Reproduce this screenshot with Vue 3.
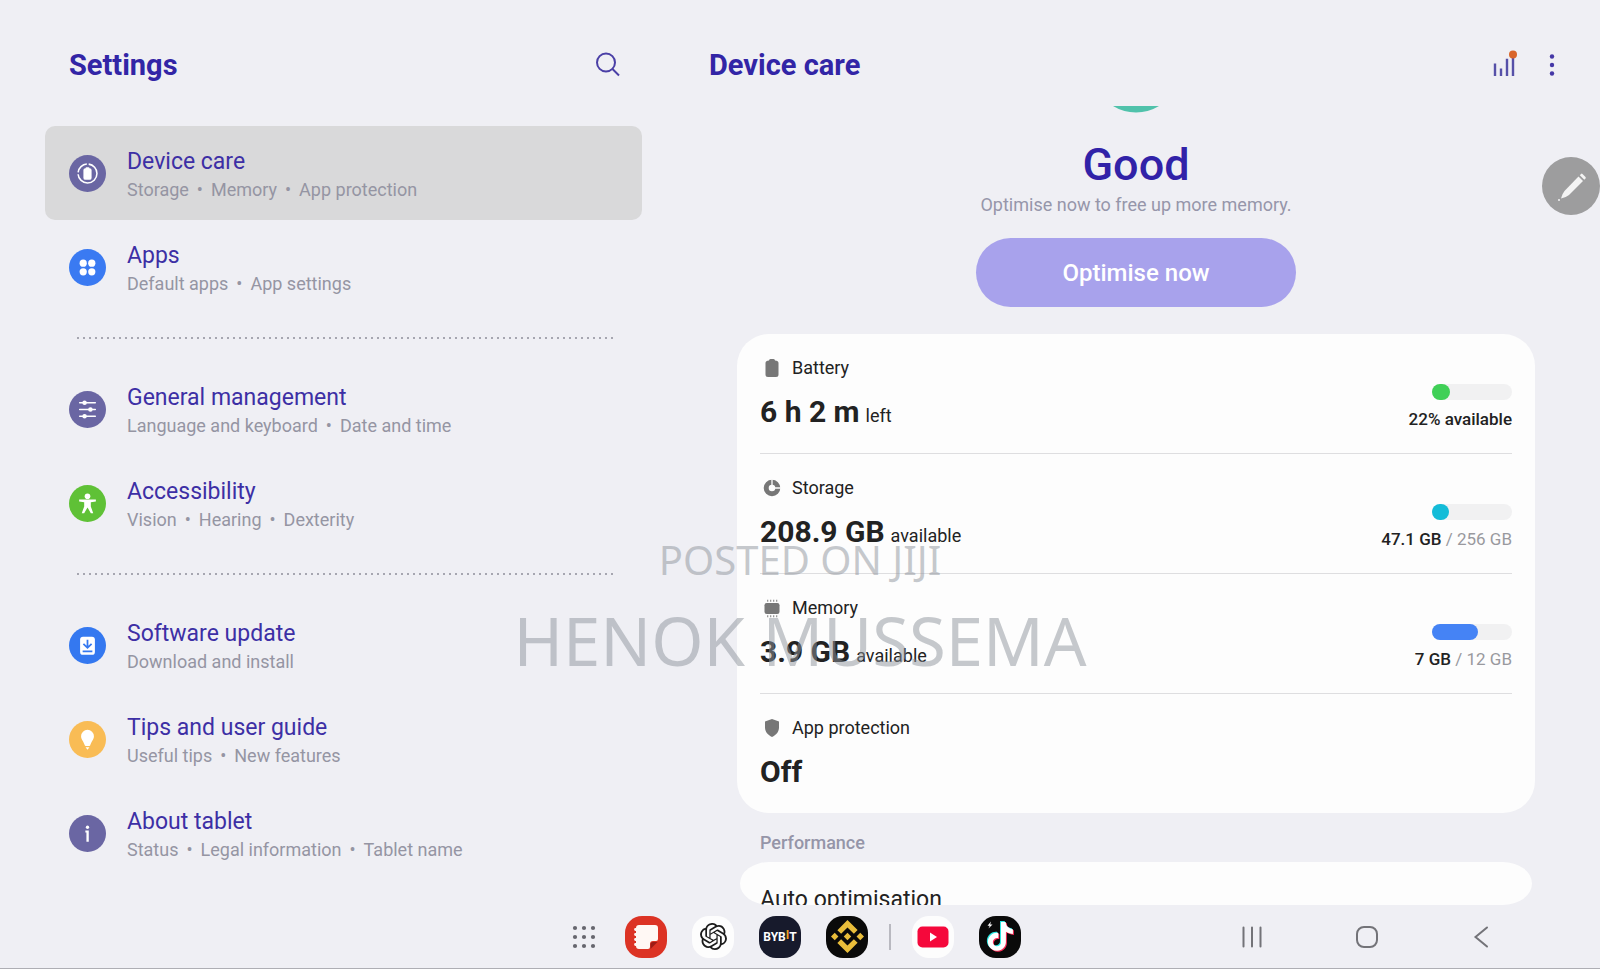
<script setup>
import { ref } from 'vue'

const active = ref('care')

const groups = [
  [
    { id: 'care', title: 'Device care', sub: ['Storage', 'Memory', 'App protection'], color: '#6a66a3' },
    { id: 'apps', title: 'Apps', sub: ['Default apps', 'App settings'], color: '#3a7af2' }
  ],
  [
    { id: 'general', title: 'General management', sub: ['Language and keyboard', 'Date and time'], color: '#6a66a3' },
    { id: 'access', title: 'Accessibility', sub: ['Vision', 'Hearing', 'Dexterity'], color: '#5fc136' }
  ],
  [
    { id: 'update', title: 'Software update', sub: ['Download and install'], color: '#3478f0' },
    { id: 'tips', title: 'Tips and user guide', sub: ['Useful tips', 'New features'], color: '#f9bc55' },
    { id: 'about', title: 'About tablet', sub: ['Status', 'Legal information', 'Tablet name'], color: '#6a66a3' }
  ]
]

const stats = [
  { id: 'battery', label: 'Battery', value: '6 h 2 m', unit: 'left', percent: 22, color: '#40d057', used: '22% available' },
  { id: 'storage', label: 'Storage', value: '208.9 GB', unit: 'available', percent: 21, color: '#14bcd8', used: '47.1 GB', total: ' / 256 GB' },
  { id: 'memory', label: 'Memory', value: '3.9 GB', unit: 'available', percent: 58, color: '#4583f5', used: '7 GB', total: ' / 12 GB' },
  { id: 'protection', label: 'App protection', value: 'Off' }
]
</script>

<template>
  <div class="screen">
    <div class="panes">
      <nav class="sidebar">
        <header class="bar">
          <h1>Settings</h1>
          <button class="icon-btn" aria-label="Search">
            <svg width="26" height="26" viewBox="0 0 26 26" fill="none" stroke="#4a3fa6" stroke-width="2">
              <circle cx="11" cy="10.5" r="9" />
              <path d="M17.5 17L24 23.5" />
            </svg>
          </button>
        </header>

        <div class="menu">
          <ul v-for="(group, i) in groups" :key="i" class="group">
            <li v-for="item in group" :key="item.id">
              <a href="#" class="item" :class="{ active: active === item.id }" @click.prevent="active = item.id">
                <svg width="37" height="37" viewBox="0 0 38 38">
                  <circle cx="19" cy="19" r="19" :fill="item.color" />
                  <g v-if="item.id === 'care'">
                    <circle cx="19" cy="19" r="9.7" fill="none" stroke="#fff" stroke-width="1.6" stroke-dasharray="29.5 2 13.2 2 14.2 0" />
                    <rect x="14.8" y="13.5" width="8.4" height="12" rx="2" fill="#fff" />
                    <rect x="17" y="12.6" width="4" height="2" rx="1" fill="#fff" />
                  </g>
                  <g v-else-if="item.id === 'apps'" fill="#fff">
                    <circle cx="14.6" cy="14.6" r="3.7" />
                    <circle cx="23.4" cy="14.6" r="3.7" />
                    <circle cx="14.6" cy="23.4" r="3.7" />
                    <circle cx="23.4" cy="23.4" r="3.7" />
                  </g>
                  <g v-else-if="item.id === 'general'" stroke="#fff" stroke-width="1.6" stroke-linecap="round">
                    <path d="M11 12h16M11 19h16M11 26h16" />
                    <g fill="#fff" stroke="none">
                      <circle cx="16" cy="12" r="2.3" />
                      <circle cx="22" cy="19" r="2.3" />
                      <circle cx="16" cy="26" r="2.3" />
                    </g>
                  </g>
                  <g v-else-if="item.id === 'access'" fill="#fff">
                    <circle cx="19" cy="11.6" r="2.9" />
                    <path d="M10.4 14.8h17.2v2.1l-5.2.7V22l2.5 7H22.400L19 23l-3.400 6h-2.500l2.500-7v-4.400l-5.200-.7z" />
                  </g>
                  <g v-else-if="item.id === 'update'">
                    <rect x="11.4" y="10" width="15.2" height="18.6" rx="3" fill="#fff" />
                    <path d="M19 13v8M14.8 17.4L19 21.4l4.2-4M14 25h10" fill="none" stroke="#3478f0" stroke-width="1.8" />
                  </g>
                  <g v-else-if="item.id === 'tips'" fill="#fff">
                    <path d="M19 9a6.6 6.6 0 0 1 6.6 6.6c0 3.6-2.6 5-3.8 9.4a1 1 0 0 1-1 .8h-3.6a1 1 0 0 1-1-.8c-1.2-4.4-3.8-5.8-3.8-9.4A6.6 6.6 0 0 1 19 9z" />
                    <path d="M17 27h4l-2 2.6z" />
                  </g>
                  <g v-else fill="#fff">
                    <circle cx="19" cy="12.6" r="1.7" />
                    <path d="M16.8 16h3.5v11.5h-2.4v-9.6h-1.1z" />
                  </g>
                </svg>
                <span class="item-text">
                  <span class="item-title">{{ item.title }}</span>
                  <span class="item-sub">
                    <template v-for="(s, n) in item.sub" :key="s">
                      <i v-if="n" class="dot">•</i>
                      <span>{{ s }}</span>
                    </template>
                  </span>
                </span>
              </a>
            </li>
          </ul>
        </div>
      </nav>

      <main class="detail">
        <header class="bar">
          <h1>Device care</h1>
          <div class="actions">
            <button class="icon-btn" aria-label="Usage">
              <svg width="28" height="30" viewBox="0 -2 28 30">
                <path d="M6 11.5v12.5M12 16.5v7.5M18 6.7v17.3M24 5v19" stroke="#5650a8" stroke-width="2.4" />
                <circle cx="24" cy="2.6" r="4" fill="#d9652b" />
              </svg>
            </button>
            <button class="icon-btn" aria-label="More options">
              <svg width="6" height="26" viewBox="0 0 6 26" fill="#4437a6">
                <circle cx="3" cy="4.5" r="2.2" />
                <circle cx="3" cy="13" r="2.2" />
                <circle cx="3" cy="21.5" r="2.2" />
              </svg>
            </button>
          </div>
        </header>

        <div class="content">
          <section class="status">
            <svg class="arc" width="46" height="7" viewBox="0 0 46 7">
              <path d="M0 0A44 44 0 0 0 46 0z" fill="#50c2ab" />
            </svg>
            <h2>Good</h2>
            <p>Optimise now to free up more memory.</p>
            <button class="optimise">Optimise now</button>
          </section>

          <section class="card">
            <div v-for="s in stats" :key="s.id" class="row">
              <div>
                <div class="label">
                  <svg width="24" height="24" viewBox="0 0 24 24" fill="#777">
                    <path v-if="s.id === 'battery'" d="M9 4.5Q9 3 10.5 3h3Q15 3 15 4.5q3.5 0 3.5 2.5v11.5q0 2.5-2.5 2.5h-8q-2.5 0-2.5-2.5V7q0-2.500 3.500-2.500z" />
                    <g v-else-if="s.id === 'storage'">
                      <circle cx="12" cy="12" r="5.8" fill="none" stroke="#777" stroke-width="5" />
                      <path d="M12 12V3M12 12h9" stroke="#fdfdfd" stroke-width="1.3" />
                    </g>
                    <g v-else-if="s.id === 'memory'">
                      <rect x="4.5" y="7" width="15" height="11" rx="2.2" />
                      <path d="M7 4.700h11M7 20.300h11" stroke="#999" stroke-width="2" stroke-dasharray="1.300 1.700" />
                    </g>
                    <path v-else d="M12 3l7 2.5v6c0 4.5-3 7.5-7 9.5-4-2-7-5-7-9.5v-6z" />
                  </svg>
                  <span>{{ s.label }}</span>
                </div>
                <div class="value">
                  <strong>{{ s.value }}</strong>
                  <span v-if="s.unit">{{ s.unit }}</span>
                </div>
              </div>
              <div v-if="s.used" class="usage">
                <div class="track">
                  <div class="fill" :style="{ width: s.percent + '%', background: s.color }"></div>
                </div>
                <div class="amount"><strong>{{ s.used }}</strong>{{ s.total }}</div>
              </div>
            </div>
          </section>

          <h3>Performance</h3>
          <section class="card next">
            <a href="#" @click.prevent>Auto optimisation</a>
          </section>
        </div>
      </main>
    </div>

    <footer class="taskbar">
      <div class="apps">
        <button class="drawer" aria-label="All apps">
          <svg width="32" height="32" viewBox="0 0 32 32" fill="#66666e">
            <template v-for="y in 3" :key="y">
              <circle v-for="x in 3" :key="x" :cx="x * 9 - 2" :cy="y * 9 - 2" r="2.1" />
            </template>
          </svg>
        </button>
        <button class="app notes" aria-label="Notes">
          <svg width="42" height="42" viewBox="0 0 42 42">
            <path d="M14 9h16q3 0 3 3v11q0 2-2 2h-3q-3 0-3 3v3q0 2-2 2h-9q-3 0-3-3V12q0-3 3-3z" fill="#fff8f4" />
            <path d="M25.500 33v-4.500q0-2.500 2.500-2.500h4.500z" fill="#9c1c16" />
            <path d="M10.5 13.500h2M10.500 18.500h2M10.500 23.500h2M10.500 28.500h2" stroke="#fff8f4" stroke-width="2.800" stroke-linecap="round" />
          </svg>
        </button>
        <button class="app white" aria-label="ChatGPT">
          <svg width="27" height="27" viewBox="0 0 24 24" fill="#1c1c1c">
            <path d="M22.2819 9.8211a5.9847 5.9847 0 0 0-.5157-4.9108 6.0462 6.0462 0 0 0-6.5098-2.9A6.0651 6.0651 0 0 0 4.9807 4.1818a5.9847 5.9847 0 0 0-3.9977 2.9 6.0462 6.0462 0 0 0 .7427 7.0966 5.98 5.98 0 0 0 .511 4.9107 6.051 6.051 0 0 0 6.5146 2.9001A5.9847 5.9847 0 0 0 13.2599 24a6.0557 6.0557 0 0 0 5.7718-4.2058 5.9894 5.9894 0 0 0 3.9977-2.9001 6.0557 6.0557 0 0 0-.7475-7.0729zm-9.022 12.6081a4.4755 4.4755 0 0 1-2.8764-1.0408l.1419-.0804 4.7783-2.7582a.7948.7948 0 0 0 .3927-.6813v-6.7369l2.02 1.1686a.071.071 0 0 1 .038.052v5.5826a4.504 4.504 0 0 1-4.4945 4.4944zm-9.6607-4.1254a4.4708 4.4708 0 0 1-.5346-3.0137l.142.0852 4.783 2.7582a.7712.7712 0 0 0 .7806 0l5.8428-3.3685v2.3324a.0804.0804 0 0 1-.0332.0615L9.74 19.9502a4.4992 4.4992 0 0 1-6.1408-1.6464zM2.3408 7.8956a4.485 4.485 0 0 1 2.3655-1.9728V11.6a.7664.7664 0 0 0 .3879.6765l5.8144 3.3543-2.0201 1.1685a.0757.0757 0 0 1-.071 0l-4.8303-2.7865A4.504 4.504 0 0 1 2.3408 7.872zm16.5963 3.8558L13.1038 8.364 15.1192 7.2a.0757.0757 0 0 1 .071 0l4.8303 2.7913a4.4944 4.4944 0 0 1-.6765 8.1042v-5.6772a.79.79 0 0 0-.407-.667zm2.0107-3.0231l-.142-.0852-4.7735-2.7818a.7759.7759 0 0 0-.7854 0L9.409 9.2297V6.8974a.0662.0662 0 0 1 .0284-.0615l4.8303-2.7866a4.4992 4.4992 0 0 1 6.6802 4.66zM8.3065 12.863l-2.02-1.1638a.0804.0804 0 0 1-.038-.0567V6.0742a4.4992 4.4992 0 0 1 7.3757-3.4537l-.142.0805L8.704 5.459a.7948.7948 0 0 0-.3927.6813zm1.0976-2.3654l2.602-1.4998 2.6069 1.4998v2.9994l-2.5974 1.4997-2.6067-1.4997Z" />
          </svg>
        </button>
        <button class="app bybit" aria-label="Bybit">BYB<i>I</i>T</button>
        <button class="app black" aria-label="Binance">
          <svg width="33" height="33" viewBox="0 0 24 24" fill="#e9bd3a">
            <path d="M16.624 13.9202l2.7175 2.7154-7.353 7.353-7.353-7.352 2.7175-2.7164 4.6355 4.6595 4.6356-4.6595zm4.6366-4.6366L24 12l-2.7154 2.7164L18.5682 12l2.6924-2.7164zm-9.272.001l2.7163 2.6914-2.7164 2.7174v-.001L9.2721 12l2.7164-2.7154zm-9.2722-.001L5.4088 12l-2.6914 2.6924L0 12l2.7164-2.7164zM11.9885.0115l7.353 7.329-2.7174 2.7154-4.6356-4.6356-4.6355 4.6595-2.7174-2.7154 7.353-7.353z" />
          </svg>
        </button>
        <span class="sep"></span>
        <button class="app white" aria-label="YouTube">
          <svg width="32" height="22" viewBox="0 0 32 22">
            <rect x="0.5" y="0.5" width="31" height="21" rx="5" fill="#f5083b" />
            <path d="M13 6.5v9l7-4.5z" fill="#fff" />
          </svg>
        </button>
        <button class="app black" aria-label="TikTok">
          <svg width="42" height="42" viewBox="0 0 42 42">
            <g v-for="(c, n) in ['#2be8e2', '#fb2b55', '#fff']" :key="c" :fill="c">
              <path :transform="`translate(${[6, 8, 7][n]} ${[5, 7, 6][n]}) scale(1.2)`" d="M12.525.02c1.31-.02 2.61-.01 3.91-.02.08 1.53.63 3.09 1.75 4.17 1.12 1.11 2.7 1.62 4.24 1.79v4.03c-1.44-.05-2.89-.35-4.2-.97-.57-.26-1.1-.59-1.62-.93-.01 2.92.01 5.84-.02 8.75-.08 1.4-.54 2.79-1.35 3.94-1.31 1.92-3.58 3.17-5.91 3.21-1.43.08-2.86-.31-4.08-1.03-2.02-1.19-3.44-3.37-3.65-5.71-.02-.5-.03-1-.01-1.49.18-1.9 1.12-3.72 2.58-4.96 1.66-1.44 3.98-2.13 6.15-1.72.02 1.48-.04 2.96-.04 4.44-.99-.32-2.15-.23-3.02.37-.63.41-1.11 1.04-1.36 1.75-.21.51-.15 1.07-.14 1.61.24 1.64 1.82 3.02 3.5 2.87 1.12-.01 2.19-.66 2.77-1.61.19-.33.4-.67.41-1.06.1-1.79.06-3.57.07-5.36.01-4.03-.01-8.05.02-12.07z" />
            </g>
            <path d="M12 5.5l-3.5 4.2h2.2L9.5 12.5l4-4h-2.3z" fill="#fff" />
          </svg>
        </button>
      </div>

      <div class="keys">
        <button aria-label="Recents">
          <svg width="24" height="24" viewBox="0 0 24 24" stroke="#737378" stroke-width="2" stroke-linecap="round">
            <path d="M3.5 2.5v19M12 2.5v19M20.5 2.5v19" />
          </svg>
        </button>
        <button aria-label="Home">
          <svg width="24" height="24" viewBox="0 0 24 24" fill="none" stroke="#737378" stroke-width="2">
            <rect x="2" y="2" width="20" height="20" rx="7" />
          </svg>
        </button>
        <button aria-label="Back">
          <svg width="24" height="24" viewBox="0 0 24 24" fill="none" stroke="#737378" stroke-width="2" stroke-linecap="round">
            <path d="M17 2.500L5.500 12l11.500 9.500" />
          </svg>
        </button>
      </div>
    </footer>

    <button class="pen" aria-label="Pen">
      <svg width="58" height="58" viewBox="0 0 58 58" fill="#f4f4f4">
        <path d="M36.5 19.5l4.5 4.5L27 38Q24 40.5 19 41.5 20 37 22.5 34z" />
        <path d="M37.8 18.2l1.2-1.3q.8-.6 1.5 0l3 3q.6.8 0 1.5l-1.2 1.3z" />
        <circle cx="17" cy="43" r="1" />
      </svg>
    </button>

    <div class="watermark">
      <span class="posted">POSTED ON JIJI</span>
      <span class="seller">HENOK MUSSEMA</span>
    </div>
  </div>
</template>

<style>
body {
  margin: 0;
}
</style>

<style scoped>
.screen {
  position: relative;
  height: 100vh;
  box-sizing: border-box;
  display: flex;
  flex-direction: column;
  overflow: hidden;
  background: #efeff4;
  border-bottom: 1px solid #aeaeb4;
  font-family: Roboto, "Liberation Sans", sans-serif;
  color: #222;
}

button {
  padding: 0;
  border: none;
  background: none;
  font-family: inherit;
  cursor: pointer;
}

svg {
  display: block;
  flex: none;
}

a {
  color: inherit;
  text-decoration: none;
}

h1,
h2,
h3,
p,
ul {
  margin: 0;
  padding: 0;
}

.panes {
  flex: 1;
  min-height: 0;
  display: grid;
  grid-template-columns: 42% 1fr;
}

.bar {
  height: 80px;
  padding-top: 25px;
  flex: none;
  display: flex;
  align-items: center;
  justify-content: space-between;
}

.bar h1 {
  font-size: 29px;
  font-weight: 700;
  color: #3225a6;
}

.sidebar {
  padding: 0 30px 0 45px;
}

.sidebar .bar {
  padding-left: 24px;
  padding-right: 21px;
}

.menu {
  padding-top: 21px;
}

.group {
  list-style: none;
}

.group + .group::before {
  content: '';
  display: block;
  height: 2px;
  margin: 23px 29px 23px 32px;
  background: repeating-linear-gradient(90deg, #a6a6b0 0 2px, transparent 2px 6px);
}

.item {
  height: 94px;
  padding-left: 24px;
  display: flex;
  align-items: center;
  gap: 21px;
  border-radius: 10px;
}

.item.active {
  background: #d9d9da;
}

.item-text {
  padding-top: 6px;
  display: flex;
  flex-direction: column;
}

.item-title {
  font-size: 23px;
  line-height: 28px;
  color: #3d2fa5;
}

.item-sub {
  font-size: 18px;
  line-height: 28px;
  color: #9595a3;
}

.dot {
  margin: 0 8px;
  font-style: normal;
}

.detail {
  min-height: 0;
  display: flex;
  flex-direction: column;
}

.detail .bar {
  padding-left: 37px;
  padding-right: 45px;
}

.actions {
  display: flex;
  align-items: center;
  gap: 32px;
}

.content {
  flex: 1;
  min-height: 0;
  padding: 0 65px;
  display: flex;
  flex-direction: column;
  overflow: hidden;
}

.status {
  display: flex;
  flex-direction: column;
  align-items: center;
}

.arc {
  margin-top: 1px;
}

.status h2 {
  margin-top: 26px;
  font-size: 45px;
  line-height: 52px;
  font-weight: 500;
  color: #3122a8;
}

.status p {
  margin-top: 2px;
  font-size: 18px;
  line-height: 24px;
  color: #9696aa;
}

.optimise {
  width: 40%;
  height: 69px;
  margin: 21px 0 27px;
  border-radius: 35px;
  background: #a8a2ec;
  color: #fff;
  font-size: 24px;
  font-weight: 500;
}

.card {
  flex: none;
  padding: 0 23px;
  border-radius: 32px;
  background: #fdfdfd;
}

.row {
  padding: 22px 0 23px;
  display: flex;
  justify-content: space-between;
  align-items: flex-end;
  border-bottom: 1px solid #dedee0;
}

.row:last-child {
  border-bottom: none;
}

.label {
  display: flex;
  gap: 8px;
  font-size: 18px;
  line-height: 24px;
}

.value {
  height: 36px;
  margin-top: 14px;
  line-height: 36px;
  font-size: 18px;
}

.value strong {
  margin-right: 6px;
  font-size: 30px;
  font-weight: 700;
}

.usage {
  display: flex;
  flex-direction: column;
  align-items: flex-end;
  gap: 8px;
}

.track {
  width: 80px;
  height: 16px;
  border-radius: 8px;
  background: #f1f1f2;
}

.fill {
  height: 100%;
  border-radius: 8px;
}

.amount {
  font-size: 17px;
  line-height: 22px;
  color: #99999e;
  white-space: pre;
}

.amount strong {
  font-weight: 500;
  color: #222;
}

h3 {
  margin: 18px 23px 7px;
  font-size: 18px;
  line-height: 24px;
  font-weight: 500;
  color: #9595a8;
}

.next {
  flex: 1;
  min-height: 0;
  margin: 0 3px;
  padding: 22px 20px 0;
  border-radius: 30px / 22px;
  overflow: hidden;
  font-size: 23px;
  line-height: 32px;
}

.taskbar {
  flex: none;
  height: 63px;
  padding: 0 106px 0 35.5%;
  display: flex;
  align-items: center;
  justify-content: space-between;
}

.apps {
  display: flex;
  align-items: center;
  gap: 25px;
}

.app {
  width: 42px;
  height: 42px;
  flex: none;
  display: flex;
  align-items: center;
  justify-content: center;
  border-radius: 17px;
}

.notes {
  background: #dc3324;
}

.white {
  background: #fdfdfd;
}

.black {
  background: #0a0a0a;
}

.bybit {
  background: #171a2c;
  color: #fff;
  font-size: 12px;
  font-weight: 700;
}

.bybit i {
  margin-bottom: 4px;
  font-style: normal;
  color: #f0a020;
}

.sep {
  width: 2px;
  height: 26px;
  margin: 0 -4px;
  background: #b9b9c0;
}

.keys {
  display: flex;
  gap: 91px;
}

.pen {
  position: absolute;
  right: 0;
  top: 157px;
  border-radius: 50%;
  background: #9d9d9e;
}

.watermark {
  position: absolute;
  inset: 0;
  padding-top: 531px;
  display: flex;
  flex-direction: column;
  align-items: center;
  font-family: "Noto Sans", sans-serif;
  color: rgba(142, 147, 155, 0.5);
  pointer-events: none;
}

.posted {
  font-size: 40px;
  line-height: 58px;
}

.seller {
  font-size: 67px;
  line-height: 102px;
}
</style>
